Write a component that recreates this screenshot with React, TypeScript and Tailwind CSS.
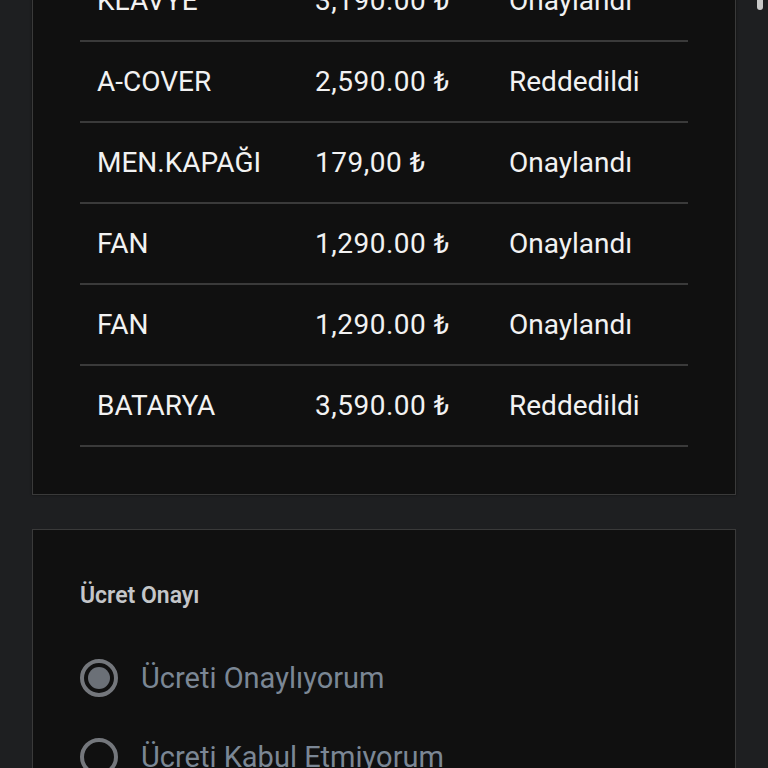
import React from "react";

const rows = [
  ["KLAVYE", "3,190.00 ₺", "Onaylandı"],
  ["A-COVER", "2,590.00 ₺", "Reddedildi"],
  ["MEN.KAPAĞI", "179,00 ₺", "Onaylandı"],
  ["FAN", "1,290.00 ₺", "Onaylandı"],
  ["FAN", "1,290.00 ₺", "Onaylandı"],
  ["BATARYA", "3,590.00 ₺", "Reddedildi"],
];

export default function App() {
  return (
    <div
      className="relative h-[768px] w-[768px] overflow-hidden bg-[#1e1f21]"
      style={{ fontFamily: "Roboto, 'Noto Sans', sans-serif" }}
    >
      <div className="absolute right-[5px] top-0 h-[10px] w-[6px] rounded-b-full bg-[#c8c8c8]" />
      <div className="flex flex-col gap-[34px] px-[32px]">
        <div className="mt-[-88px] border border-[#3a3a3a] bg-[#101010] px-[47px] pt-[48px] pb-[47px] shadow-[0_0_2px_rgba(0,0,0,0.6)]">
          {rows.map((r, i) => (
            <div
              key={i}
              className="grid h-[81px] grid-cols-[219px_194px_1fr] items-center border-b-2 border-[#3a3a3a] text-[28px] text-[#f2f2f2]"
            >
              <div className="pl-[17px]">{r[0]}</div>
              <div className="pl-[16px] tracking-[0.5px]">{r[1]}</div>
              <div className="pl-[16px]">{r[2]}</div>
            </div>
          ))}
        </div>
        <div className="h-[400px] border border-[#3a3a3a] bg-[#101010] px-[47px] pt-[52px]">
          <div className="text-[23px] font-semibold leading-[28px] text-[#c4c6c9]">Ücret Onayı</div>
          <div className="mt-[49px] flex flex-col gap-[41px]">
            <div className="flex items-center gap-[23px]">
              <div className="flex h-[38px] w-[38px] items-center justify-center rounded-full border-4 border-[#74777c]">
                <div className="h-[22px] w-[22px] rounded-full bg-[#6b7077]" />
              </div>
              <span className="text-[29px] leading-[38px] text-[#7b8795]">Ücreti Onaylıyorum</span>
            </div>
            <div className="flex items-center gap-[23px]">
              <div className="h-[38px] w-[38px] rounded-full border-4 border-[#74777c]" />
              <span className="text-[29px] leading-[38px] text-[#7b8795]">Ücreti Kabul Etmiyorum</span>
            </div>
          </div>
        </div>
      </div>
    </div>
  );
}
